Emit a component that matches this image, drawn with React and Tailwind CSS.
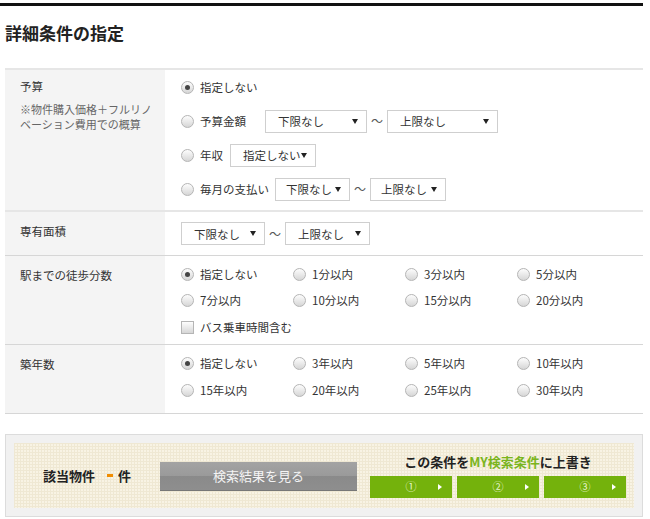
import React from "react";

const font = { fontFamily: '"Noto Sans CJK JP", "Noto Sans", sans-serif' };

function Radio({ checked }) {
  return (
    <span className="relative inline-flex h-[13px] w-[13px] shrink-0 items-center justify-center rounded-full border border-[#b5b5b5] bg-[linear-gradient(#fdfdfd,#d6d6d6)]">
      {checked && <span className="h-[5px] w-[5px] rounded-full bg-[#444]" />}
    </span>
  );
}

function RadioItem({ checked, label, className = "" }) {
  return (
    <label className={"flex items-center gap-[6px] whitespace-nowrap text-[11.5px] leading-[16px] text-[#333] " + className}>
      <Radio checked={checked} />
      <span>{label}</span>
    </label>
  );
}

function Select({ label, w, pl = "pl-[12px]" }) {
  return (
    <div
      className={"flex h-[23px] items-center justify-between whitespace-nowrap border border-[#cfcfcf] bg-white pr-[8px] text-[11.5px] leading-[16px] text-[#333] " + pl}
      style={{ width: w }}
    >
      <span>{label}</span>
      <span className="h-0 w-0 shrink-0 border-x-[3px] border-t-[5px] border-x-transparent border-t-[#222]" />
    </div>
  );
}

function Tilde() {
  return <span className="mx-[4px] text-[12px] leading-[16px] text-[#555]">〜</span>;
}

function Label({ children }) {
  return (
    <div className="w-[160px] shrink-0 bg-[#f4f4f4] pl-[15px] pt-[11px] text-[11.5px] leading-[16px] text-[#333]">
      {children}
    </div>
  );
}

export default function App() {
  const walk = ["指定しない", "1分以内", "3分以内", "5分以内", "7分以内", "10分以内", "15分以内", "20分以内"];
  const age = ["指定しない", "3年以内", "5年以内", "10年以内", "15年以内", "20年以内", "25年以内", "30年以内"];
  return (
    <div className="h-[519px] w-[650px] bg-white" style={font}>
      <div className="pt-[3px]">
        <div className="h-[3px] w-[643px] bg-[#111]" />
      </div>
      <h1 className="ml-[5px] mt-[17px] text-[17px] font-bold leading-[20px] text-[#222]">詳細条件の指定</h1>

      <div className="ml-[5px] mt-[25px] w-[638px] border-t-2 border-[#e6e6e6]">
        {/* 予算 */}
        <div className="flex h-[142px] border-b-2 border-[#e6e6e6]">
          <Label>
            <div className="mt-[-3px]">予算</div>
            <div className="mt-[8px] text-[11px] leading-[15px] text-[#666]">
              ※物件購入価格＋フルリノ
              <br />
              ベーション費用での概算
            </div>
          </Label>
          <div className="flex flex-col gap-[12px] pl-[16px] pt-[6px]">
            <div className="flex h-[22px] items-center">
              <RadioItem checked label="指定しない" />
            </div>
            <div className="flex h-[22px] items-center">
              <RadioItem label="予算金額" />
              <div className="ml-[19px] flex items-center">
                <Select label="下限なし" w={102} />
                <Tilde />
                <Select label="上限なし" w={111} />
              </div>
            </div>
            <div className="flex h-[22px] items-center">
              <RadioItem label="年収" />
              <div className="ml-[7px]">
                <Select label="指定しない" w={86} />
              </div>
            </div>
            <div className="flex h-[22px] items-center">
              <RadioItem label="毎月の支払い" />
              <div className="ml-[6px] flex items-center">
                <Select label="下限なし" w={75} pl="pl-[10px]" />
                <Tilde />
                <Select label="上限なし" w={76} pl="pl-[10px]" />
              </div>
            </div>
          </div>
        </div>

        {/* 専有面積 */}
        <div className="flex h-[44px] border-b border-[#d6d6d6]">
          <Label>専有面積</Label>
          <div className="flex items-center pl-[16px]">
            <Select label="下限なし" w={84} />
            <Tilde />
            <Select label="上限なし" w={85} />
          </div>
        </div>

        {/* 駅までの徒歩分数 */}
        <div className="flex h-[89px] border-b border-[#d6d6d6]">
          <Label>駅までの徒歩分数</Label>
          <div className="pl-[16px] pt-[10px]">
            <div className="grid grid-cols-[112px_112px_112px_112px] gap-y-[10px]">
              {walk.map((w, i) => (
                <RadioItem key={w} checked={i === 0} label={w} />
              ))}
            </div>
            <label className="mt-[11px] flex items-center gap-[6px] text-[11.5px] leading-[16px] text-[#333]">
              <span className="h-[13px] w-[13px] border border-[#b5b5b5] bg-[linear-gradient(#fdfdfd,#d6d6d6)]" />
              <span>バス乗車時間含む</span>
            </label>
          </div>
        </div>

        {/* 築年数 */}
        <div className="flex h-[69px] border-b border-[#d6d6d6]">
          <Label>築年数</Label>
          <div className="pl-[16px] pt-[10px]">
            <div className="grid grid-cols-[112px_112px_112px_112px] gap-y-[11px]">
              {age.map((w, i) => (
                <RadioItem key={w} checked={i === 0} label={w} />
              ))}
            </div>
          </div>
        </div>
      </div>

      {/* bottom box */}
      <div className="ml-[5px] mt-[20px] w-[638px] border border-[#dcdcdc] bg-[#f1f1f1] p-[8px]">
        <div className="flex h-[65px] items-center bg-[#f8f3e4] bg-[linear-gradient(#efe8d3_1px,transparent_1px),linear-gradient(90deg,#efe8d3_1px,transparent_1px)] bg-[size:3px_3px]">
          <div className="ml-[29px] flex w-[117px] items-center text-[13px] font-bold leading-[16px] text-[#222]">
            <span>該当物件</span>
            <span className="ml-[12px] h-[3px] w-[6px] bg-[#f08c00]" />
            <span className="ml-[5px]">件</span>
          </div>
          <div className="flex h-[28px] w-[197px] items-center justify-center bg-[linear-gradient(#a3a3a3,#9a9a9a_50%,#8a8a8a_50%,#8e8e8e)] text-[13px] leading-[16px] text-[#f4f4f4] shadow-[0_1px_0_#777]">
            検索結果を見る
          </div>
          <div className="ml-[13px] flex flex-col items-center">
            <div className="text-[13px] font-bold leading-[16px] text-[#222]">
              この条件を<span className="text-[#7ab51d]">MY検索条件</span>に上書き
            </div>
            <div className="mt-[6px] flex gap-[5px]">
              {["①", "②", "③"].map((n) => (
                <div key={n} className="relative flex h-[22px] w-[82px] items-center justify-center bg-[#74b20c] text-[11px] leading-none text-[#e8f5d0]">
                  {n}
                  <span className="absolute right-[10px] h-0 w-0 border-y-[3px] border-l-[4px] border-y-transparent border-l-white" />
                </div>
              ))}
            </div>
          </div>
        </div>
      </div>
    </div>
  );
}
